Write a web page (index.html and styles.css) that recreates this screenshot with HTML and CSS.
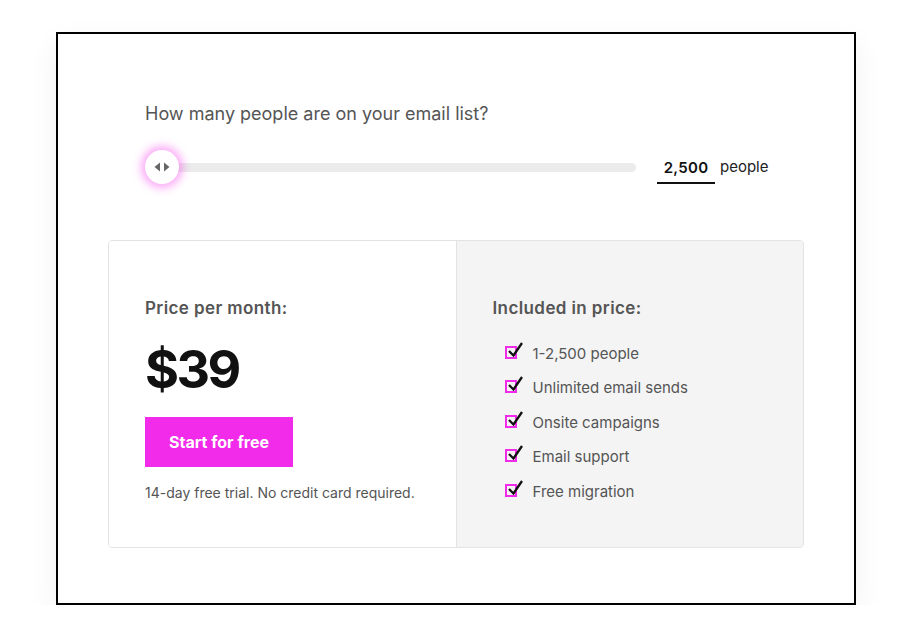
FILE: index.html
```html
<!DOCTYPE html>
<html>
<head>
<meta charset="utf-8">
<link rel="stylesheet" href="styles.css">
</head>
<body>
<div class="frame">
  <div class="question">How many people are on your email list?</div>
  <div class="slider-row">
    <div class="slider">
      <div class="track"></div>
      <div class="thumb">
        <svg width="20" height="12" viewBox="0 0 20 12"><path d="M8 1.5 L2.5 6 L8 10.5 Z" fill="#666"/><path d="M12 1.5 L17.5 6 L12 10.5 Z" fill="#666"/></svg>
      </div>
    </div>
    <div class="count">2,500</div>
    <div class="unit">people</div>
  </div>
  <div class="card">
    <div class="col left">
      <div class="label">Price per month:</div>
      <div class="price">$39</div>
      <div class="btn">Start for free</div>
      <div class="note">14-day free trial. No credit card required.</div>
    </div>
    <div class="col right">
      <div class="label">Included in price:</div>
      <ul class="list">
        <li><svg class="chk" width="22" height="20" viewBox="0 0 22 20"><rect x="2" y="6" width="10" height="11" fill="none" stroke="#f22ae9" stroke-width="2"/><path d="M5 10 L9.5 14.5 L18 2" fill="none" stroke="#111" stroke-width="2.3"/></svg>1-2,500 people</li>
        <li><svg class="chk" width="22" height="20" viewBox="0 0 22 20"><rect x="2" y="6" width="10" height="11" fill="none" stroke="#f22ae9" stroke-width="2"/><path d="M5 10 L9.5 14.5 L18 2" fill="none" stroke="#111" stroke-width="2.3"/></svg>Unlimited email sends</li>
        <li><svg class="chk" width="22" height="20" viewBox="0 0 22 20"><rect x="2" y="6" width="10" height="11" fill="none" stroke="#f22ae9" stroke-width="2"/><path d="M5 10 L9.5 14.5 L18 2" fill="none" stroke="#111" stroke-width="2.3"/></svg>Onsite campaigns</li>
        <li><svg class="chk" width="22" height="20" viewBox="0 0 22 20"><rect x="2" y="6" width="10" height="11" fill="none" stroke="#f22ae9" stroke-width="2"/><path d="M5 10 L9.5 14.5 L18 2" fill="none" stroke="#111" stroke-width="2.3"/></svg>Email support</li>
        <li><svg class="chk" width="22" height="20" viewBox="0 0 22 20"><rect x="2" y="6" width="10" height="11" fill="none" stroke="#f22ae9" stroke-width="2"/><path d="M5 10 L9.5 14.5 L18 2" fill="none" stroke="#111" stroke-width="2.3"/></svg>Free migration</li>
      </ul>
    </div>
  </div>
</div>
</body>
</html>
```

FILE: styles.css
```css
html, body {
  margin: 0;
  padding: 0;
  background: #fff;
}
body {
  font-family: Inter, "Open Sans", sans-serif;
  color: #555;
}
.frame {
  box-sizing: border-box;
  width: 800px;
  height: 573px;
  margin: 32px 0 0 56px;
  border: 2px solid #000;
  padding: 68px 50px 0 50px;
  box-shadow: 0 12px 30px rgba(0, 0, 0, 0.06);
  background: #fff;
}
.question {
  margin-left: 37px;
  font-size: 18px;
  line-height: 24px;
  color: #555;
}
.slider-row {
  display: flex;
  align-items: center;
  margin: 23px 0 0 37px;
  height: 36px;
}
.slider {
  position: relative;
  width: 491px;
  height: 36px;
  display: flex;
  align-items: center;
}
.track {
  margin-left: 15px;
  flex: 1;
  height: 9px;
  border-radius: 5px;
  background: #ebebeb;
}
.thumb {
  position: absolute;
  left: 0;
  top: 1px;
  width: 34px;
  height: 34px;
  border-radius: 50%;
  background: #fff;
  box-shadow: 0 0 8px 4px rgba(242, 42, 233, 0.4);
  display: flex;
  align-items: center;
  justify-content: center;
}
.count {
  margin-left: 21px;
  width: 58px;
  box-sizing: border-box;
  text-align: center;
  font-size: 15px;
  font-weight: 600;
  color: #111;
  line-height: 20px;
  padding-top: 3px;
  padding-bottom: 4px;
  border-bottom: 2px solid #111;
  margin-top: 5px;
  letter-spacing: 0.3px;
}
.unit {
  margin-left: 5px;
  font-size: 15px;
  color: #222;
  margin-bottom: 2px;
}
.card {
  display: flex;
  margin-top: 55px;
  height: 308px;
  box-sizing: border-box;
  border: 1px solid #e3e3e3;
  border-radius: 4px;
  overflow: hidden;
}
.col {
  flex: 1;
  box-sizing: border-box;
  padding: 55px 0 0 36px;
}
.left {
  background: #fff;
  border-right: 1px solid #e3e3e3;
}
.right {
  background: #f4f4f4;
}
.label {
  font-size: 17px;
  font-weight: 600;
  line-height: 24px;
  color: #555;
  letter-spacing: 0.4px;
}
.price {
  margin-top: 20px;
  font-size: 52px;
  font-weight: 700;
  line-height: 60px;
  color: #111;
  letter-spacing: -2.5px;
}
.btn {
  margin-top: 17px;
  width: 148px;
  height: 50px;
  background: #f22ae9;
  color: #fff;
  font-size: 16px;
  font-weight: 700;
  display: flex;
  align-items: center;
  justify-content: center;
}
.note {
  margin-top: 17px;
  font-size: 14px;
  color: #555;
  line-height: 18px;
}
.list {
  list-style: none;
  margin: 16px 0 0 11px;
  padding: 0;
}
.list li {
  display: flex;
  align-items: center;
  height: 34.5px;
  font-size: 15px;
  color: #555;
}
.chk {
  margin-right: 7px;
  margin-top: -5px;
}
```
